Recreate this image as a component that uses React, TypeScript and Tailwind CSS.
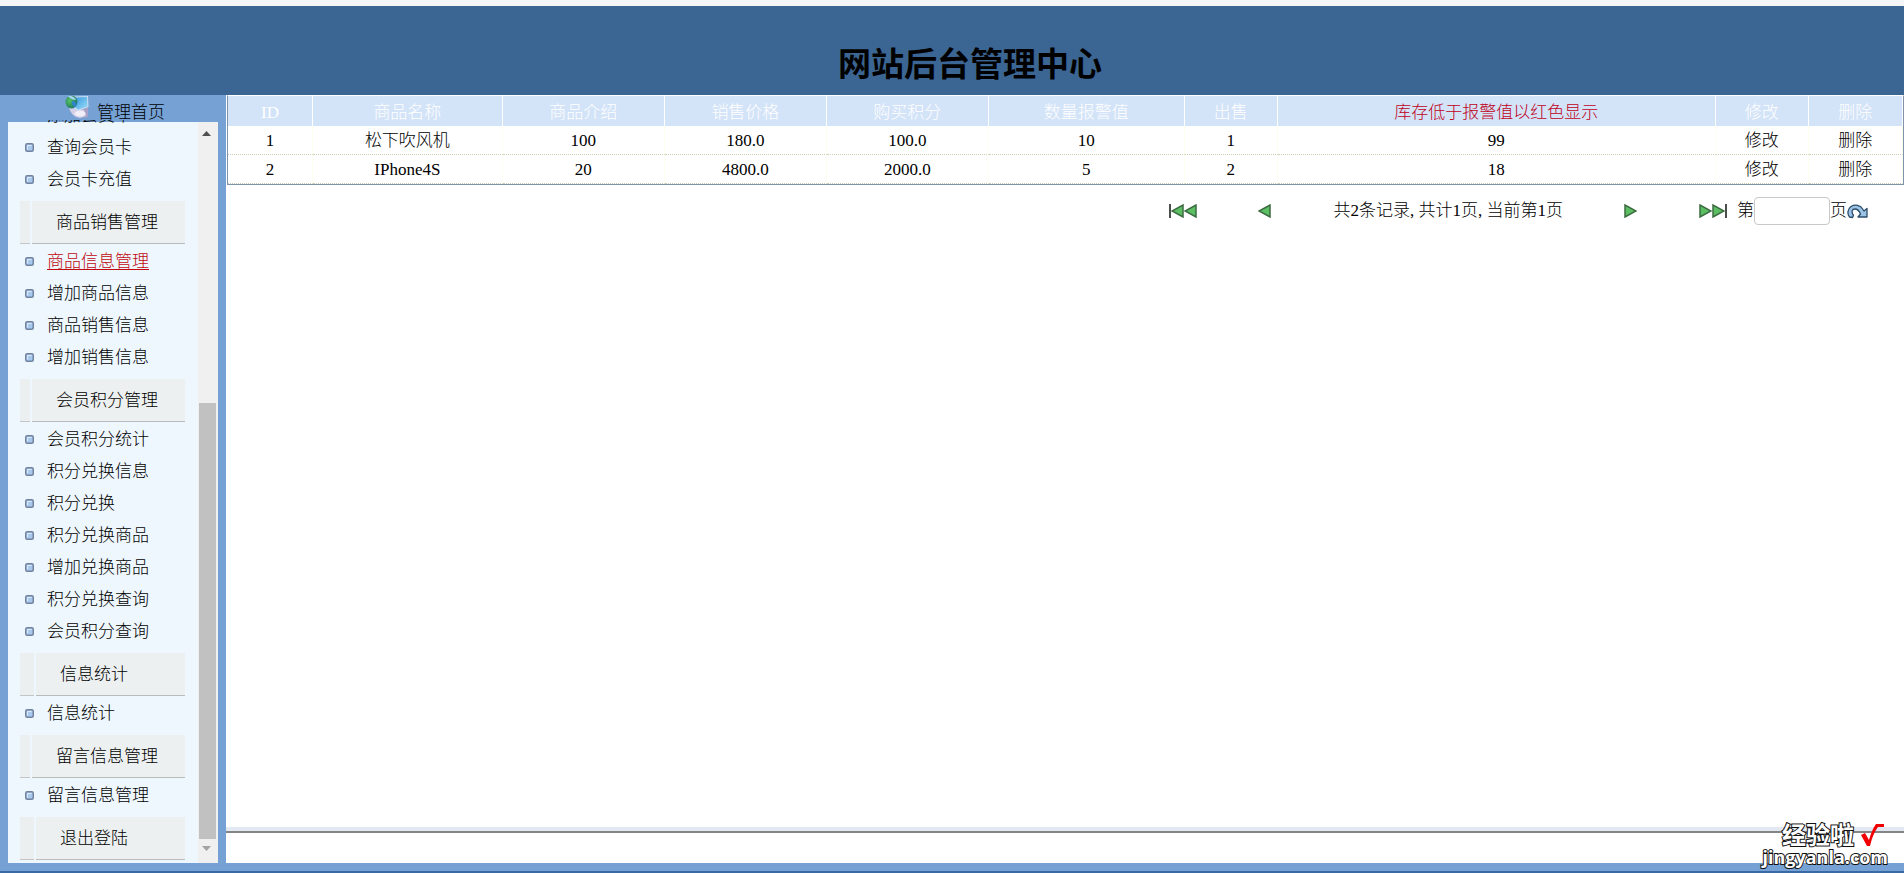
import React from "react";

type Group = { title?: string; items: string[] };

const groups: Group[] = [
  { items: ["添加会员卡", "查询会员卡", "会员卡充值"] },
  { title: "商品销售管理", items: ["商品信息管理", "增加商品信息", "商品销售信息", "增加销售信息"] },
  {
    title: "会员积分管理",
    items: ["会员积分统计", "积分兑换信息", "积分兑换", "积分兑换商品", "增加兑换商品", "积分兑换查询", "会员积分查询"],
  },
  { title: "信息统计", items: ["信息统计"] },
  { title: "留言信息管理", items: ["留言信息管理"] },
  { title: "退出登陆", items: [] },
];

const columns = [
  { name: "ID", width: "w-[5.08%]" },
  { name: "商品名称", width: "w-[11.32%]" },
  { name: "商品介绍", width: "w-[9.68%]" },
  { name: "销售价格", width: "w-[9.68%]" },
  { name: "购买积分", width: "w-[9.66%]" },
  { name: "数量报警值", width: "w-[11.7%]" },
  { name: "出售", width: "w-[5.55%]" },
  { name: "库存低于报警值以红色显示", width: "w-[26.15%]" },
  { name: "修改", width: "w-[5.55%]" },
  { name: "删除", width: "w-[5.63%]" },
];

const rows = [
  ["1", "松下吹风机", "100", "180.0", "100.0", "10", "1", "99"],
  ["2", "IPhone4S", "20", "4800.0", "2000.0", "5", "2", "18"],
];

function GlobeIcon() {
  return (
    <svg width="24" height="24" viewBox="0 0 24 24" aria-hidden="true">
      <defs>
        <linearGradient id="screen" x1="0" y1="0" x2="1" y2="1">
          <stop offset="0" stopColor="#3a9be0" />
          <stop offset="1" stopColor="#9adcf8" />
        </linearGradient>
        <radialGradient id="globe" cx="0.35" cy="0.4" r="0.8">
          <stop offset="0" stopColor="#58c268" />
          <stop offset="0.6" stopColor="#2b8b5a" />
          <stop offset="1" stopColor="#2368a8" />
        </radialGradient>
      </defs>
      <path d="M17 13 L23 12 L23 22 L16 23 Z" fill="#a9a0c8" />
      <path d="M4 12 C5 18 9 22 15 23 L21 21 L19 15 L10 14 Z" fill="#d5cfe6" />
      <ellipse cx="15" cy="18.500" rx="5.500" ry="3" fill="#f1eef8" />
      <path d="M9 1.500 L23 1 L23.500 12 L13 16 L8 13 Z" fill="#c9dcf2" />
      <path d="M11 2.500 L22 2 L22.500 11.500 L13 14.500 L10 12 Z" fill="url(#screen)" />
      <ellipse cx="6.500" cy="7" rx="6" ry="6.500" fill="url(#globe)" />
      <path d="M3 1.500 C6 0 10 2 11 5 C8 5 6 4 3 1.500 Z" fill="#a8d6f4" />
      <path d="M7 6 C11 6 12 9 10 12 C8 11 6 9 7 6 Z" fill="#2f86cc" />
    </svg>
  );
}

function Bullet() {
  return (
    <svg width="9" height="9" viewBox="0 0 9 9" aria-hidden="true">
      <rect x="0.75" y="0.75" width="7.5" height="7.5" rx="1.5" fill="#a9c8ee" stroke="#71839f" strokeWidth="1.5" />
      <path d="M2.500 6.500 V2.500 H6.500" fill="none" stroke="#dcebfb" />
    </svg>
  );
}

function Triangle({ flip = false }: { flip?: boolean }) {
  return (
    <svg width="13" height="14" viewBox="0 0 13 14" aria-hidden="true">
      <path
        d={flip ? "M12 1 V13 L1 7 Z" : "M1 1 V13 L12 7 Z"}
        fill="#5cbf62"
        stroke="#3d6b41"
        strokeWidth="1.5"
      />
    </svg>
  );
}

function EdgeBar() {
  return (
    <svg width="2" height="14" viewBox="0 0 2 14" aria-hidden="true">
      <path d="M1 0 V14" stroke="#4a4f4a" strokeWidth="2" />
    </svg>
  );
}

function GoIcon() {
  return (
    <svg width="21" height="15" viewBox="0 0 21 15" aria-hidden="true">
      <path
        d="M2.500 13 C0 10 0.500 5 4 2.500 C8 0 13.500 1 16 5.500 L17 7 L20 4.500 V13 H11 L13.500 10 C12 6.500 10 5 8 5 C5 5 4 8 6.500 11.500 L5.500 13.500 Z"
        fill="#9cc3e6"
        stroke="#2b4c68"
        strokeWidth="1.3"
        strokeLinejoin="round"
      />
    </svg>
  );
}

function GroupTitle({ title }: { title: string }) {
  const short = title.length === 4;
  return (
    <h2 className="mb-px ml-3 flex h-[43px] w-[165px] gap-0.5">
      <span
        className={
          (short ? "w-3.5" : "w-2.5") + " shrink-0 border-b border-[#c3c5c6] bg-[#eceff0]"
        }
      />
      <span className="flex flex-1 items-center border-b border-[#b9bbbc] bg-[#edf0f0] pl-6">
        <a href="#" className="pt-0.5">{title}</a>
      </span>
    </h2>
  );
}

function Sidebar() {
  return (
    <aside className="flex w-[226px] shrink-0 flex-col bg-[#75a1d4] pr-2 pl-2">
      <a href="#" className="flex h-[27px] pl-[57px]">
        <GlobeIcon />
        <span className="pt-[5px] pl-2 leading-[26px]">管理首页</span>
      </a>
      <div className="-mt-0.5 flex flex-1 overflow-hidden bg-[linear-gradient(to_bottom,transparent_2px,#eef7fd_2px)]">
        <nav className="-mt-[21px] flex-1 pb-0.5">
          {groups.map((group, g) => (
            <section key={g} className={g < groups.length - 1 ? "pb-1.5" : ""}>
              {group.title && <GroupTitle title={group.title} />}
              <ul>
                {group.items.map((item) => (
                  <li key={item} className="flex h-8 items-center gap-[13px] pl-[17px] whitespace-nowrap">
                    <Bullet />
                    <a
                      href="#"
                      className={
                        "pt-0.5 " +
                        (item === "商品信息管理" ? "text-[#c00810] underline underline-offset-2" : "")
                      }
                    >
                      {item}
                    </a>
                  </li>
                ))}
              </ul>
            </section>
          ))}
        </nav>
        <div className="mt-0.5 flex w-5 shrink-0 flex-col items-start bg-[#f0f0f0]">
          <svg className="ml-1" width="9" height="24" viewBox="0 0 9 24" aria-hidden="true">
            <path d="M4.500 9 L9 14 H0 Z" fill="#505050" />
          </svg>
          <div className="grow-[257]" />
          <div className="ml-px w-[17px] grow-[437] bg-[#c1c1c1]" />
          <svg className="ml-1" width="9" height="24" viewBox="0 0 9 24" aria-hidden="true">
            <path d="M0 7 H9 L4.500 12 Z" fill="#a3a3a3" />
          </svg>
        </div>
      </div>
    </aside>
  );
}

function GoodsTable() {
  return (
    <div className="pl-px">
      <table className="w-full table-fixed border-separate border-spacing-0 border border-[#7f93ab] border-t-white text-center">
        <thead>
          <tr className="h-[30px] bg-[#d3e3f8] text-white">
            {columns.map((column, i) => (
              <th
                key={column.name}
                className={
                  column.width +
                  " border-r border-white p-0 pt-1 leading-6 font-light " +
                  (i === 7 ? "text-[#c00018]" : "")
                }
              >
                {column.name}
              </th>
            ))}
          </tr>
        </thead>
        <tbody>
          {rows.map((row) => (
            <tr key={row[0]} className="h-[29px]">
              {[...row, "修改", "删除"].map((cell, i) => (
                <td
                  key={i}
                  className="border-r border-b border-r-[#fdfdf0] border-b-[#c8cfb4] [border-bottom-style:dotted] p-0 pt-0.5 leading-6"
                >
                  {i > 7 ? <a href="#">{cell}</a> : cell}
                </td>
              ))}
            </tr>
          ))}
        </tbody>
      </table>
    </div>
  );
}

function Pager() {
  return (
    <div className="flex items-center justify-end pt-3 pr-9">
      <button type="button" aria-label="首页" className="flex">
        <EdgeBar />
        <Triangle flip />
        <Triangle flip />
      </button>
      <button type="button" aria-label="上一页" className="ml-[61px] flex">
        <Triangle flip />
      </button>
      <span className="mr-[61px] ml-[63px] whitespace-nowrap">共2条记录, 共计1页, 当前第1页</span>
      <button type="button" aria-label="下一页" className="flex">
        <Triangle />
      </button>
      <button type="button" aria-label="尾页" className="mr-2.5 ml-[62px] flex">
        <Triangle />
        <Triangle />
        <EdgeBar />
      </button>
      <label htmlFor="page">第</label>
      <input id="page" type="text" className="h-7 w-[76px] rounded-sm border border-[#c8c8c8] bg-white px-1" />
      <span>页</span>
      <button type="button" aria-label="跳转" className="flex">
        <GoIcon />
      </button>
    </div>
  );
}

function Watermark() {
  return (
    <div className="absolute right-4 bottom-1 flex flex-col items-end font-['Open_Sans','Noto_Sans_CJK_SC',sans-serif] font-bold text-white [-webkit-text-stroke:2px_#111] [paint-order:stroke_fill]">
      <div className="flex items-center gap-1.5 pr-1 text-2xl leading-6">
        <span>经验啦</span>
        <svg width="24" height="24" viewBox="0 0 24 24" aria-hidden="true">
          <path d="M1 12 L5 10 L9 17 C11 10 13 5 16 1 H24 V4 H18 C14 9 12 15 10 23 H7 Z" fill="#f20000" />
        </svg>
      </div>
      <span className="text-lg leading-5">jingyanla.com</span>
    </div>
  );
}

export default function App() {
  return (
    <div className="relative flex min-h-screen flex-col border-b-2 border-[#3a6aa5] bg-white font-['Liberation_Serif','Noto_Sans_CJK_SC',sans-serif] text-[17px] font-light text-black">
      <header className="border-t-[6px] border-[#f5f6f8] bg-[#3b6592] pt-9 pb-[13px]">
        <h1 className="pl-9 text-center font-['Noto_Sans_CJK_SC',sans-serif] text-[33px] leading-10 font-bold">
          网站后台管理中心
        </h1>
      </header>
      <div className="flex flex-1 border-b-8 border-[#75a1d4]">
        <Sidebar />
        <main className="flex min-w-0 flex-1 flex-col">
          <GoodsTable />
          <Pager />
          <div className="mt-auto h-9 border-t-4 border-[#e2e9f3]">
            <div className="h-0.5 bg-[#858585]" />
          </div>
        </main>
      </div>
      <Watermark />
    </div>
  );
}
